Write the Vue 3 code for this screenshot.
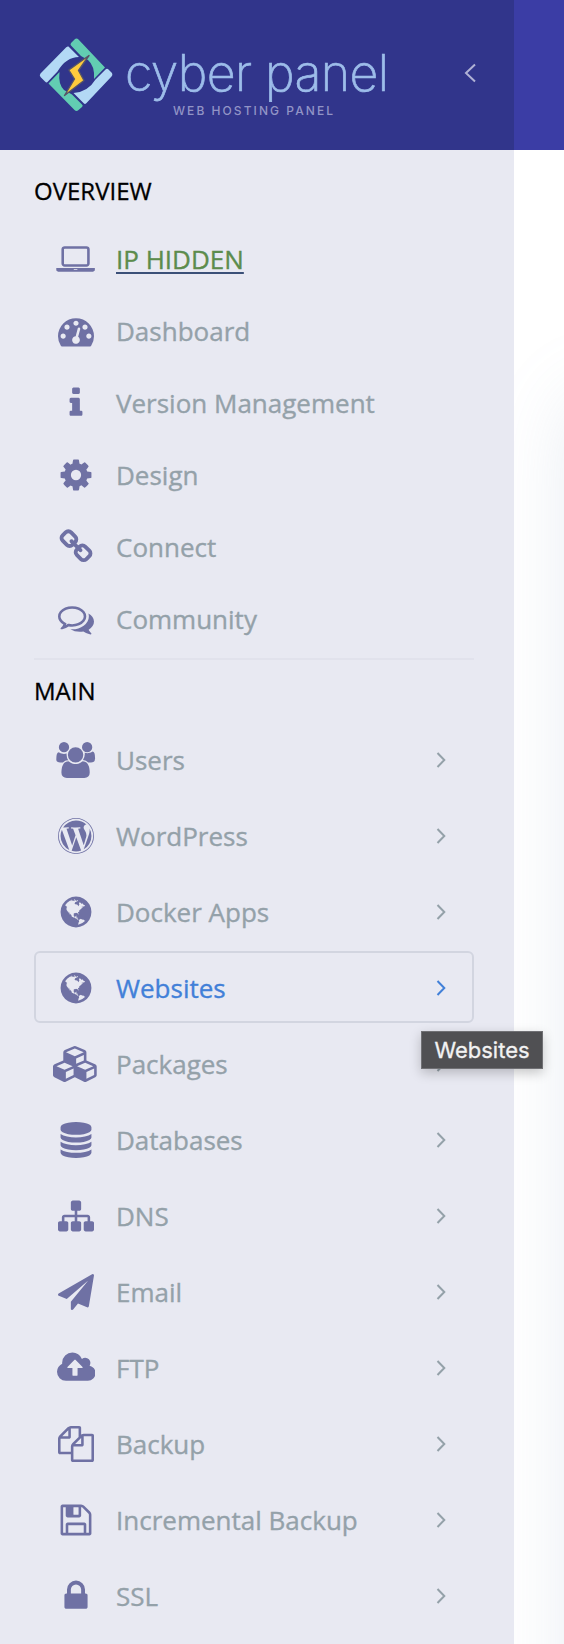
<script setup>
const icons = {
  laptop: { w: 2048, d: 'M480 1280q-66 0-113-47t-47-113v-704q0-66 47-113t113-47h1088q66 0 113 47t47 113v704q0 66-47 113t-113 47h-1088zm-32-864v704q0 13 9.5 22.5t22.5 9.5h1088q13 0 22.5-9.5t9.5-22.5v-704q0-13-9.5-22.5t-22.5-9.5h-1088q-13 0-22.5 9.5t-9.5 22.5zm1376 928h160v96q0 40-47 68t-113 28h-1600q-66 0-113-28t-47-68v-96h1760zm-720 96q16 0 16-16t-16-16h-160q-16 0-16 16t16 16h160z' },
  gauge: { w: 1792, d: 'M384 1152q0-53-37.5-90.5t-90.5-37.5-90.5 37.5-37.5 90.5 37.5 90.5 90.5 37.5 90.5-37.5 37.5-90.5zm192-448q0-53-37.5-90.5t-90.5-37.5-90.5 37.5-37.5 90.5 37.5 90.5 90.5 37.5 90.5-37.5 37.5-90.5zm428 481l101-382q6-26-7.5-48.5t-38.5-29.5-48 6.5-30 39.5l-101 382q-60 5-107 43.5t-63 98.5q-20 77 20 146t117 89 146-20 89-117q16-60-6-117t-72-91zm660-33q0-53-37.5-90.5t-90.5-37.5-90.5 37.5-37.5 90.5 37.5 90.5 90.5 37.5 90.5-37.5 37.5-90.5zm-640-640q0-53-37.5-90.5t-90.5-37.5-90.5 37.5-37.5 90.5 37.5 90.5 90.5 37.5 90.5-37.5 37.5-90.5zm448 192q0-53-37.5-90.5t-90.5-37.5-90.5 37.5-37.5 90.5 37.5 90.5 90.5 37.5 90.5-37.5 37.5-90.5zm320 448q0 261-141 483-19 29-54 29h-1402q-35 0-54-29-141-221-141-483 0-182 71-348t191-286 286-191 348-71 348 71 286 191 191 286 71 348z' },
  info: { w: 1792, d: 'M1216 1344v128q0 26-19 45t-45 19h-512q-26 0-45-19t-19-45v-128q0-26 19-45t45-19h64v-384h-64q-26 0-45-19t-19-45v-128q0-26 19-45t45-19h384q26 0 45 19t19 45v576h64q26 0 45 19t19 45zm-128-1152v192q0 26-19 45t-45 19h-256q-26 0-45-19t-19-45v-192q0-26 19-45t45-19h256q26 0 45 19t19 45z' },
  cog: { w: 1792, d: 'M1152 896q0-106-75-181t-181-75-181 75-75 181 75 181 181 75 181-75 75-181zm512-109v222q0 12-8 23t-20 13l-185 28q-19 54-39 91 35 50 107 138 10 12 10 25t-9 23q-27 37-99 108t-94 71q-12 0-26-9l-138-108q-44 23-91 38-16 136-29 186-7 28-36 28h-222q-14 0-24.5-8.5t-11.5-21.5l-28-184q-49-16-90-37l-141 107q-10 9-25 9-14 0-25-11-126-114-165-168-7-10-7-23 0-12 8-23 15-21 51-66.5t54-70.5q-27-50-41-99l-183-27q-13-2-21-12.5t-8-23.5v-222q0-12 8-23t19-13l186-28q14-46 39-92-40-57-107-138-10-12-10-24 0-10 9-23 26-36 98.5-107.5t94.5-71.5q13 0 26 10l138 107q44-23 91-38 16-136 29-186 7-28 36-28h222q14 0 24.5 8.5t11.5 21.5l28 184q49 16 90 37l142-107q9-9 24-9 13 0 25 10 129 119 165 170 7 8 7 22 0 12-8 23-15 21-51 66.5t-54 70.5q26 50 41 98l183 28q13 2 21 12.5t8 23.5z' },
  link: { w: 1792, d: 'M1520 1216q0-40-28-68l-208-208q-28-28-68-28-42 0-72 32 3 3 19 18.5t21.5 21.5 15 19 13 25.5 3.5 27.5q0 40-28 68t-68 28q-15 0-27.5-3.5t-25.5-13-19-15-21.5-21.5-18.5-19q-33 31-33 73 0 40 28 68l206 207q27 27 68 27 40 0 68-26l147-146q28-28 28-67zm-703-705q0-40-28-68l-206-207q-28-28-68-28-39 0-68 27l-147 146q-28 28-28 67 0 40 28 68l208 208q27 27 68 27 42 0 72-31-3-3-19-18.5t-21.5-21.5-15-19-13-25.5-3.5-27.5q0-40 28-68t68-28q15 0 27.5 3.5t25.5 13 19 15 21.5 21.5 18.5 19q33-31 33-73zm895 705q0 120-85 203l-147 146q-83 83-203 83-121 0-204-85l-206-207q-83-83-83-203 0-123 88-209l-88-88q-86 88-208 88-120 0-204-84l-208-208q-84-84-84-204t85-203l147-146q83-83 203-83 121 0 204 85l206 207q83 83 83 203 0 123-88 209l88 88q86-88 208-88 120 0 204 84l208 208q84 84 84 204z' },
  comments: { w: 1792, d: 'M704 384q-153 0-286 52t-211.5 141-78.5 191q0 82 53 158t149 132l97 56-35 84q34-20 62-39l44-31 53 10q78 14 153 14 153 0 286-52t211.5-141 78.5-191-78.5-191-211.5-141-286-52zm0-128q191 0 353.5 68.5t256.5 186.5 94 257-94 257-256.5 186.5-353.5 68.5q-86 0-176-16-124 88-278 128-36 9-86 16h-3q-11 0-20.5-8t-11.5-21q-1-3-1-6.5t.5-6.5 2-6l2.5-5 3.5-5.5 4-5 4.5-5 4-4.5q5-6 23-25t26-29.5 22.5-29 25-38.5 20.5-44q-124-72-195-177t-71-224q0-139 94-257t256.5-186.5 353.5-68.5zm822 1169q10 24 20.5 44t25 38.5 22.5 29 26 29.5 23 25q1 1 4 4.5t4.5 5 4 5 3.5 5.5l2.5 5 2 6 .5 6.5-1 6.5q-3 14-13 22t-22 7q-50-7-86-16-154-40-278-128-90 16-176 16-271 0-472-132 58 4 88 4 161 0 309-45t264-129q125-92 192-212t67-254q0-77-23-152 129 71 204 178t75 230q0 120-71 224.5t-195 176.5z' },
  users: { w: 2048, d: 'M657 896q-162 5-265 128h-134q-82 0-138-40.5t-56-118.5q0-353 124-353 6 0 43.5 21t97.5 42.5 119 21.5q67 0 133-23-5 37-5 66 0 159 93 293zm1071 637q0 120-73 189.5t-194 69.5h-874q-121 0-194-69.5t-73-189.5q0-53 3.5-103.5t14-109 26.5-108.5 43-97.5 62-81 85.5-53.5 111.5-20q10 0 43 21.5t73 48 107 48 135 21.5 135-21.5 107-48 73-48 43-21.5q61 0 111.5 20t85.5 53.5 62 81 43 97.5 26.5 108.5 14 109 3.5 103.5zm-1024-1277q0 106-75 181t-181 75-181-75-75-181 75-181 181-75 181 75 75 181zm704 384q0 159-112.5 271.5t-271.5 112.5-271.5-112.5-112.5-271.5 112.5-271.5 271.5-112.5 271.5 112.5 112.5 271.5zm576 225q0 78-56 118.5t-138 40.5h-134q-103-123-265-128 93-134 93-293 0-29-5-66 66 23 133 23 59 0 119-21.5t97.5-42.5 43.5-21q124 0 124 353zm-128-609q0 106-75 181t-181 75-181-75-75-181 75-181 181-75 181 75 75 181z' },
  wordpress: { w: 1792, d: 'M127 896q0-163 67-313l367 1005q-196-95-315-281t-119-411zm1288-39q0 19-2.5 38.5t-10 49.5-11.5 44-17.5 59-17.5 58l-76 256-278-826q46-3 88-8 19-2 26-18.5t-2.5-31-28.5-13.5l-205 10q-75-1-202-10-12-1-20.5 5t-11.5 15-1.5 18.5 9 16.5 19.5 8l80 8 120 328-168 504-280-832q46-3 88-8 19-2 26-18.5t-2.5-31-28.5-13.5l-205 10q-7 0-23-.5t-26-.5q105-160 274.5-253.5t367.5-93.5q147 0 280.5 53t238.5 149h-10q-55 0-92 40.5t-37 95.5q0 12 2 24t4 21.5 8 23 9 21 12 22.5 12.5 21 14.5 24 14 23q63 107 63 212zm-506 106l237 647q1 6 5 11-126 44-255 44-112 0-217-32zm661-436q95 174 95 369 0 209-104 385.5t-279 278.5l235-678q59-169 59-276 0-42-6-79zm-674-527q182 0 348 71t286 191 191 286 71 348-71 348-191 286-286 191-348 71-348-71-286-191-191-286-71-348 71-348 191-286 286-191 348-71zm0 1751q173 0 331.5-68t273-182.5 182.5-273 68-331.5-68-331.5-182.5-273-273-182.5-331.5-68-331.5 68-273 182.5-182.5 273-68 331.5 68 331.5 182.5 273 273 182.5 331.5 68z' },
  globe: { w: 1792, d: 'M896 128q209 0 385.5 103t279.5 279.5 103 385.5-103 385.5-279.5 279.5-385.5 103-385.5-103-279.5-279.5-103-385.5 103-385.5 279.5-279.5 385.5-103zm274 521q-2 1-9.5 9.5t-13.5 9.5q2 0 4.5-5t5-11 3.5-7q6-7 22-15 14-6 52-12 34-8 51 11-2-2 9.5-13t14.5-12q3-2 15-4.5t15-7.5l2-22q-12 1-17.5-7t-6.5-21q0 2-6 8 0-7-4.5-8t-11.5 1-9 1q-10-3-15-7.5t-8-16.5-4-15q-2-5-9.5-10.5t-9.5-10.5q-1-2-2.5-5.5t-3-6.5-4-5.5-5.5-2.5-7 5-7.5 10-4.5 5q-3-2-6-1.5t-4.5 1-4.5 3-5 3.5q-3 2-8.5 3t-8.5 2q15-5-1-11-10-4-16-3 9-4 7.5-12t-8.5-14h5q-1-4-8.5-8.5t-17.5-8.5-13-6q-8-5-34-9.5t-33-.5q-5 6-4.5 10.5t4 14 3.5 12.5q1 6-5.5 13t-6.5 12q0 7 14 15.5t10 21.5q-3 8-16 16t-16 12q-5 8-1.5 18.5t10.5 16.5q2 2 1.5 4t-3.5 4.5-5.5 4-6.5 3.5l-3 2q-11 5-20.5-6t-13.5-26q-7-25-16-30-23-8-29 1-5-13-41-26-25-9-58-4 6-1 0-15-7-15-19-12 3-6 4-17.5t1-13.5q3-13 12-23 1-1 7-8.5t9.5-13.5.5-6q35 4 50-11 5-5 11.5-17t10.5-17q9-6 14-5.5t14.5 5.5 14.5 5q14 1 15.5-11t-7.5-20q12 1 3-17-4-7-8-9-12-4-27 5-8 4 2 8-1-1-9.5 10.5t-16.5 17.5-16-5q-1-1-5.5-13.5t-9.5-13.5q-8 0-16 15 3-8-11-15t-24-8q19-12-8-27-7-4-20.5-5t-19.5 4q-5 7-5.5 11.5t5 8 10.5 5.5 11.5 4 8.5 3q14 10 8 14-2 1-8.5 3.5t-11.5 4.5-6 4q-3 4 0 14t-2 14q-5-5-9-17.5t-7-16.5q7 9-25 6l-10-1q-4 0-16 2t-20.5 1-13.5-8q-4-8 0-20 1-4 4-2-4-3-11-9.5t-10-8.5q-46 15-94 41 6 1 12-1 5-2 13-6.5t10-5.5q34-14 42-7l5-5q14 16 20 25-7-4-30-1-20 6-22 12 7 12 5 18-4-3-11.5-10t-14.5-11-15-5q-16 0-22 1-146 80-235 222 7 7 12 8 4 1 5 9t2.5 11 11.5-3q9 8 3 19 1-1 44 27 19 17 21 21 3 11-10 18-1-2-9-9t-9-4q-3 5 .5 18.5t10.5 12.5q-7 0-9.5 16t-2.5 35.5-1 23.5l2 1q-3 12 5.5 34.5t21.5 19.5q-13 3 20 43 6 8 8 9 3 2 12 7.5t15 10 10 10.5q4 5 10 22.5t14 23.5q-2 6 9.5 20t10.5 23q-1 0-2.5 1t-2.5 1q3 7 15.5 14t15.5 13q1 3 2 10t3 11 8 2q2-20-24-62-15-25-17-29-3-5-5.5-15.5t-4.5-14.5q2 0 6 1.5t8.5 3.5 7.5 4 2 3q-3 7 2 17.5t12 18.5 17 19 12 13q6 6 14 19.5t0 13.5q9 0 20 10.5t17 19.5q5 8 8 26t5 24q2 7 8.5 13.5t12.5 9.5l16 8 13 7q5 2 18.5 10.5t21.5 11.5q10 4 16 4t14.5-2.5 13.5-3.5q15-2 29 15t21 21q36 19 55 11-2 1 .5 7.5t8 15.5 9 14.5 5.5 8.5q5 6 18 15t18 15q6-4 7-9-3 8 7 20t18 10q14-3 14-32-31 15-49-18 0-1-2.5-5.5t-4-8.5-2.5-8.5 0-7.5 5-3q9 0 10-3.5t-2-12.5-4-13q-1-8-11-20t-12-15q-5 9-16 8t-16-9q0 1-1.5 5.5t-1.5 6.5q-13 0-15-1 1-3 2.5-17.5t3.5-22.5q1-4 5.5-12t7.5-14.5 4-12.5-4.5-9.5-17.5-2.5q-19 1-26 20-1 3-3 10.5t-5 11.5-9 7q-7 3-24 2t-24-5q-13-8-22.5-29t-9.5-37q0-10 2.5-26.5t3-25-5.5-24.5q3-2 9-9.5t10-10.5q2-1 4.5-1.5t4.5 0 4-1.5 3-6q-1-1-4-3-3-3-4-3 7 3 28.5-1.5t27.5 1.5q15 11 22-2 0-1-2.5-9.5t-.5-13.5q5 27 29 9 3 3 15.5 5t17.5 5q3 2 7 5.5t5.5 4.5 5-.5 8.5-6.5q10 14 12 24 11 40 19 44 7 3 11 2t4.5-9.5 0-14-1.5-12.5l-1-8v-18l-1-8q-15-3-18.5-12t1.5-18.5 15-18.5q1-1 8-3.5t15.5-6.5 12.5-8q21-19 15-35 7 0 11-9-1 0-5-3t-7.5-5-4.5-2q9-5 2-16 5-3 7.5-11t7.5-10q9 12 21 2 8-8 1-16 5-7 20.5-10.5t18.5-9.5q7 2 8-2t1-12 3-12q4-5 15-9t13-5l17-11q3-4 0-4 18 2 31-11 10-11-6-20 3-6-3-9.5t-15-5.5q3-1 11.5-.5t10.5-1.5q15-10-7-16-17-5-43 12zm-163 877q206-36 351-189-3-3-12.5-4.5t-12.5-3.5q-18-7-24-8 1-7-2.5-13t-8-9-12.5-8-11-7q-2-2-7-6t-7-5.5-7.5-4.5-8.5-2-10 1l-3 1q-3 1-5.5 2.5t-5.5 3-4 3 0 2.5q-21-17-36-22-5-1-11-5.5t-10.5-7-10-1.5-11.5 7q-5 5-6 15t-2 13q-7-5 0-17.5t2-18.5q-3-6-10.5-4.5t-12 4.5-11.5 8.5-9 6.5-8.5 5.5-8.5 7.5q-3 4-6 12t-5 11q-2-4-11.5-6.5t-9.5-5.5q2 10 4 35t5 38q7 31-12 48-27 25-29 40-4 22 12 26 0 7-8 20.5t-7 21.5q0 6 2 16z' },
  cubes: { w: 2304, d: 'M640 1632l384-192v-314l-384 164v342zm-64-454l404-173-404-173-404 173zm1088 454l384-192v-314l-384 164v342zm-64-454l404-173-404-173-404 173zm-448-293l384-165v-266l-384 164v267zm-64-379l441-189-441-189-441 189zm1088 518v416q0 36-19 67t-52 47l-448 224q-25 14-57 14t-57-14l-448-224q-4-2-7-4-2 2-7 4l-448 224q-25 14-57 14t-57-14l-448-224q-33-16-52-47t-19-67v-416q0-38 21.5-70t56.5-48l434-186v-400q0-38 21.5-70t56.5-48l448-192q23-10 50-10t50 10l448 192q35 16 56.5 48t21.5 70v400l434 186q36 16 57 48t21 70z' },
  database: { w: 1792, d: 'M896 768q237 0 443-43t325-127v170q0 69-103 128t-280 93.5-385 34.5-385-34.5-280-93.5-103-128v-170q119 84 325 127t443 43zm0 768q237 0 443-43t325-127v170q0 69-103 128t-280 93.5-385 34.5-385-34.5-280-93.5-103-128v-170q119 84 325 127t443 43zm0-384q237 0 443-43t325-127v170q0 69-103 128t-280 93.5-385 34.5-385-34.5-280-93.5-103-128v-170q119 84 325 127t443 43zm0-1152q208 0 385 34.5t280 93.5 103 128v128q0 69-103 128t-280 93.5-385 34.5-385-34.5-280-93.5-103-128v-128q0-69 103-128t280-93.5 385-34.5z' },
  sitemap: { w: 1792, d: 'M1792 1248v320q0 40-28 68t-68 28h-320q-40 0-68-28t-28-68v-320q0-40 28-68t68-28h96v-192h-512v192h96q40 0 68 28t28 68v320q0 40-28 68t-68 28h-320q-40 0-68-28t-28-68v-320q0-40 28-68t68-28h96v-192h-512v192h96q40 0 68 28t28 68v320q0 40-28 68t-68 28h-320q-40 0-68-28t-28-68v-320q0-40 28-68t68-28h96v-192q0-52 38-90t90-38h512v-192h-96q-40 0-68-28t-28-68v-320q0-40 28-68t68-28h320q40 0 68 28t28 68v320q0 40-28 68t-68 28h-96v192h512q52 0 90 38t38 90v192h96q40 0 68 28t28 68z' },
  plane: { w: 1792, d: 'M1764 11q33 24 27 64l-256 1536q-5 29-32 45-14 8-31 8-11 0-24-5l-453-185-242 295q-18 23-49 23-13 0-22-4-19-7-30.5-23.5t-11.5-36.5v-349l864-1059-1069 925-395-162q-37-14-40-55-2-40 32-59l1664-960q15-9 32-9 20 0 36 11z' },
  cloud: { w: 1920, d: 'M1280 864q0-14-9-23l-352-352q-9-9-23-9t-23 9l-351 351q-10 12-10 24 0 14 9 23t23 9h224v352q0 13 9.5 22.5t22.5 9.5h192q13 0 22.5-9.5t9.5-22.5v-352h224q13 0 22.5-9.5t9.5-22.5zm640 288q0 159-112.5 271.5t-271.5 112.5h-1088q-185 0-316.5-131.5t-131.5-316.5q0-130 70-240t188-165q-2-30-2-43 0-212 150-362t362-150q156 0 285.5 87t188.5 231q71-62 166-62 106 0 181 75t75 181q0 76-41 138 130 31 213.5 135.5t83.5 238.5z' },
  files: { w: 1792, d: 'M1696 384q40 0 68 28t28 68v1216q0 40-28 68t-68 28h-960q-40 0-68-28t-28-68v-288h-544q-40 0-68-28t-28-68v-672q0-40 20-88t48-76l408-408q28-28 76-48t88-20h416q40 0 68 28t28 68v328q68-40 128-40h416zm-544 213l-299 299h299v-299zm-640-384l-299 299h299v-299zm196 647l316-316v-416h-384v416q0 40-28 68t-68 28h-416v640h512v-256q0-40 20-88t48-76zm956 804v-1152h-384v416q0 40-28 68t-68 28h-416v640h896z' },
  floppy: { w: 1792, d: 'M512 1536h768v-384h-768v384zm896 0h128v-896q0-14-10-38.5t-20-34.5l-281-281q-10-10-34-20t-39-10v416q0 40-28 68t-68 28h-576q-40 0-68-28t-28-68v-416h-128v1280h128v-416q0-40 28-68t68-28h832q40 0 68 28t28 68v416zm-384-928v-320q0-13-9.5-22.5t-22.5-9.5h-192q-13 0-22.5 9.5t-9.5 22.5v320q0 13 9.5 22.5t22.5 9.5h192q13 0 22.5-9.5t9.5-22.5zm640 32v928q0 40-28 68t-68 28h-1344q-40 0-68-28t-28-68v-1344q0-40 28-68t68-28h928q40 0 88 20t76 48l280 280q28 28 48 76t20 88z' },
  lock: { w: 1792, d: 'M640 768h512v-192q0-106-75-181t-181-75-181 75-75 181v192zm832 96v576q0 40-28 68t-68 28h-960q-40 0-68-28t-28-68v-576q0-40 28-68t68-28h32v-192q0-184 132-316t316-132 316 132 132 316v192h32q40 0 68 28t28 68z' },
}

const overview = [
  { icon: 'laptop', label: 'IP HIDDEN', ip: true },
  { icon: 'gauge', label: 'Dashboard' },
  { icon: 'info', label: 'Version Management' },
  { icon: 'cog', label: 'Design' },
  { icon: 'link', label: 'Connect' },
  { icon: 'comments', label: 'Community' },
]

const main = [
  { icon: 'users', label: 'Users' },
  { icon: 'wordpress', label: 'WordPress' },
  { icon: 'globe', label: 'Docker Apps' },
  { icon: 'globe', label: 'Websites', active: true },
  { icon: 'cubes', label: 'Packages' },
  { icon: 'database', label: 'Databases' },
  { icon: 'sitemap', label: 'DNS' },
  { icon: 'plane', label: 'Email' },
  { icon: 'cloud', label: 'FTP' },
  { icon: 'files', label: 'Backup' },
  { icon: 'floppy', label: 'Incremental Backup' },
  { icon: 'lock', label: 'SSL' },
]
</script>

<template>
  <div class="page">
    <aside class="sidebar">
      <header class="brand">
        <svg class="logo" width="360" height="90" viewBox="36 30 360 90">
          <g stroke-linejoin="round">
            <path d="M74.500 39.500 Q76.500 37.500 78.500 39.500 L105 67.500 L94 79 Q95 66 88 60 L81 56 L71 45.500 Q70 44.500 71 43Z" fill="#62cdb2" />
            <path d="M78.500 110 Q76.500 112 74.500 110 L48.500 83.500 L59.500 72 Q58 84 64 90 L72 94.500 L82 104.500 Q83.500 105.500 82 107Z" fill="#62cdb2" />
            <path d="M68.500 46.500 L79 57 Q66 57 57.500 71.500 L47.500 82 Q46.500 83 45 81.500 L40.500 77 Q39 75 40.500 73.500 L66 47.500 Q67.500 46 68.500 46.500Z" fill="#b3d9f5" />
            <path d="M84 103.500 L73.500 93 Q88 92 95.500 79.500 L105.500 69.500 Q107 68 108.500 69.500 L112 73 Q113 75 111.500 76.500 L86.500 103 Q85 104.500 84 103.500Z" fill="#b3d9f5" />
            <path d="M89 55.500 L68.800 70 L74.500 79 L64.500 95.500 L84 80.500 L78.500 70.500Z" fill="#ffcb3d" stroke="#565468" stroke-width="1.400" />
          </g>
          <text class="logo-name" x="125" y="91" textLength="264" lengthAdjust="spacing">cyber panel</text>
          <text class="logo-sub" x="173" y="115" textLength="160" lengthAdjust="spacing">WEB HOSTING PANEL</text>
        </svg>
        <svg class="collapse" width="14" height="20" viewBox="0 0 14 20">
          <path d="M12 1.500 L3 10 L12 18.500" />
        </svg>
      </header>

      <nav class="menu">
        <h2 class="heading">OVERVIEW</h2>
        <ul class="list">
          <li v-for="item in overview" :key="item.label" class="row">
            <span class="icon">
              <svg height="36" :width="icons[item.icon].w * 36 / 1792" :viewBox="`0 0 ${icons[item.icon].w} 1792`"><path :d="icons[item.icon].d" /></svg>
            </span>
            <span class="label" :class="{ ip: item.ip }">{{ item.label }}</span>
          </li>
        </ul>
        <div class="divider"></div>
        <h2 class="heading second">MAIN</h2>
        <ul class="list spaced">
          <li v-for="item in main" :key="item.label" class="row boxed" :class="{ active: item.active }">
            <span class="icon">
              <svg height="36" :width="icons[item.icon].w * 36 / 1792" :viewBox="`0 0 ${icons[item.icon].w} 1792`"><path :d="icons[item.icon].d" /></svg>
            </span>
            <span class="label">{{ item.label }}</span>
            <svg class="arrow" width="10" height="16" viewBox="0 0 10 16"><path d="M1.500 1 L8.300 8 L1.500 15" /></svg>
            <span v-if="item.active" class="tooltip">Websites</span>
          </li>
        </ul>
      </nav>
    </aside>
    <div class="content">
      <div class="topbar"></div>
      <div class="body"><div class="panel"></div></div>
    </div>
  </div>
</template>

<style>
body { margin: 0; }
</style>

<style scoped>
.page {
  display: flex;
  width: 564px;
  height: 1644px;
  overflow: hidden;
  background: #fff;
  font-family: "Open Sans", sans-serif;
}
.sidebar {
  position: relative;
  z-index: 1;
  width: 514px;
  flex: none;
  background: #e8e9f2;
}
.brand {
  display: flex;
  align-items: flex-start;
  justify-content: space-between;
  box-sizing: border-box;
  height: 150px;
  padding: 30px 37px 0 36px;
  background: #31358b;
}
.logo-name {
  font-family: Inter, sans-serif;
  font-weight: 200;
  font-size: 50px;
  fill: #9dbdea;
  stroke: #9dbdea;
  stroke-width: 0.700px;
}
.logo-sub {
  font-family: Inter, sans-serif;
  font-weight: 500;
  font-size: 12px;
  fill: #9194c6;
}
.collapse { margin-top: 33px; }
.collapse path {
  fill: none;
  stroke: #b0b2d5;
  stroke-width: 2;
}
.menu { padding: 16px 40px 0 34px; }
.heading {
  margin: 0;
  height: 50px;
  line-height: 50px;
  font-size: 24px;
  font-weight: 400;
  letter-spacing: 0;
  color: #000;
  -webkit-text-stroke: 0.300px #000;
}
.list {
  margin: 0;
  padding: 7px 0 0;
  list-style: none;
}
.row {
  position: relative;
  display: flex;
  align-items: center;
  height: 72px;
}
.icon {
  display: flex;
  justify-content: center;
  width: 50px;
  margin: 0 15px 0 17px;
}
.icon svg {
  flex: none;
  fill: #6f71a4;
}
.label {
  flex: 1;
  font-size: 26px;
  line-height: 36px;
  color: #94a1a9;
  -webkit-text-stroke: 0.350px currentColor;
}
.ip {
  flex: none;
  color: #5c8c4d;
  text-decoration: underline;
  text-decoration-color: #3b5078;
  text-decoration-thickness: 2px;
  text-underline-offset: 3px;
  text-decoration-skip-ink: none;
}
.divider {
  height: 2px;
  margin-top: 3px;
  background: #e1e2ec;
}
.second { margin-top: 6px; }
.spaced { padding-top: 7px; }
.boxed {
  box-sizing: border-box;
  margin-bottom: 4px;
  padding-top: 2px;
  border: 2px solid transparent;
  border-radius: 6px;
}
.boxed .icon { margin-left: 15px; }
.active { border-color: #d2d5e0; }
.active .label { color: #4280d8; }
.arrow { margin-right: 26px; }
.arrow path {
  fill: none;
  stroke: #94a1a9;
  stroke-width: 2;
}
.active .arrow path { stroke: #4280d8; }
.tooltip {
  position: absolute;
  z-index: 2;
  left: 385px;
  top: 78px;
  box-sizing: border-box;
  width: 122px;
  height: 38px;
  border: 1px solid #707074;
  background: #505053;
  color: #f2f2f2;
  font-family: Inter, sans-serif;
  font-size: 22px;
  line-height: 36px;
  text-align: center;
  -webkit-text-stroke: 0.300px #f2f2f2;
  box-shadow: 0 4px 12px rgba(0, 0, 0, 0.22);
}
.content {
  display: flex;
  flex-direction: column;
  flex: 1;
}
.topbar {
  height: 150px;
  background: #3b3da5;
}
.body {
  flex: 1;
  overflow: hidden;
}
.panel {
  height: 1400px;
  margin: 250px -200px 0 58px;
  box-shadow: 0 0 80px rgba(130, 155, 185, 0.200);
}
</style>
